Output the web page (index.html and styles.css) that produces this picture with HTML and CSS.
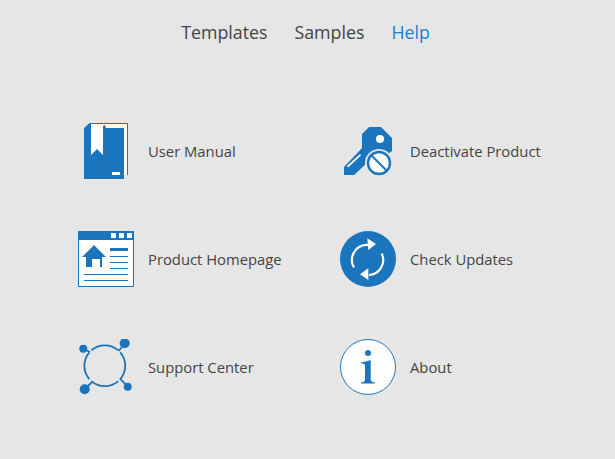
FILE: index.html
```html
<!DOCTYPE html>
<html lang="en">
<head>
<meta charset="utf-8">
<title>Help</title>
<link rel="stylesheet" href="styles.css">
</head>
<body>
<nav class="tabs">
  <a class="tab">Templates</a>
  <a class="tab">Samples</a>
  <a class="tab tab-active">Help</a>
</nav>
<main class="grid">
  <a class="item">
    <svg class="icon" viewBox="0 0 56 56" width="56" height="56">
      <path class="white" d="M11 1H49V52H46V5H11Z"/>
      <path class="outline" d="M11 .5H49.500V52"/>
      <path class="fill" d="M6 5 11 .5H13V5H25V3L27 2 28 5H46V56H6Z"/>
      <path class="white" d="M13 1H25V32L19 26L13 32Z"/>
      <rect class="white" x="34" y="49" width="8" height="3"/>
    </svg>
    <span class="label">User Manual</span>
  </a>
  <a class="item">
    <svg class="icon" viewBox="0 0 56 56" width="56" height="56">
      <path class="fill" d="M4 44 22 25V11L29 4H41L52 15V28L38 38H29L14 52H4Z"/>
      <path class="white" d="M7 43 20 31 21 32.500 8 44.500Z"/>
      <circle class="white" cx="40" cy="16" r="4"/>
      <circle class="halo" cx="39" cy="40" r="14"/>
      <circle class="ring" cx="39" cy="40" r="11"/>
      <path class="slash" d="M31.500 32.500 46.500 47.500"/>
    </svg>
    <span class="label">Deactivate Product</span>
  </a>
  <a class="item">
    <svg class="icon" viewBox="0 0 56 56" width="56" height="56">
      <rect class="white" x="0.500" y="0.500" width="55" height="55"/>
      <rect class="outline" x="0.500" y="0.500" width="55" height="55"/>
      <rect class="fill" width="56" height="9"/>
      <path class="white" d="M33 2h5v5h-5zM41 2h5v5h-5zM49 2h5v5h-5z"/>
      <path class="fill" d="M16 14 28 26H24V36H8V26H4Z"/>
      <rect class="white" x="14" y="28" width="8" height="8"/>
      <path class="fill" d="M32 17h18v3H32zM32 25h18v1H32zM32 31h18v1H32zM32 37h18v1H32zM6 43h44v1H6zM6 49h44v1H6z"/>
    </svg>
    <span class="label">Product Homepage</span>
  </a>
  <a class="item">
    <svg class="icon" viewBox="0 0 56 56" width="56" height="56">
      <circle class="fill" cx="28" cy="28" r="28"/>
      <path class="arrow" d="M14 36.500A15 15 0 0 1 28 14"/>
      <path class="white" d="M27.300 7.300 36 13 28.300 19Z"/>
      <path class="arrow" d="M41.700 22.500A15 15 0 0 1 29 44"/>
      <path class="white" d="M20 43.300 28.300 37.300V49Z"/>
    </svg>
    <span class="label">Check Updates</span>
  </a>
  <a class="item">
    <svg class="icon" viewBox="0 0 56 56" width="56" height="56">
      <path class="ring-thin" d="M13.400 11.300A20.400 20.400 0 0 1 40.200 11.300M42.200 13.300A20.400 20.400 0 0 1 42.200 40.100M40.200 42.100A20.400 20.400 0 0 1 13.400 42.100M11.400 40.100A20.400 20.400 0 0 1 11.400 13.300"/>
      <path class="link" d="M5.300 9.700 12 13M46.700 4.300 40.700 12M6.700 50.300 14 43M49.700 47.700 42 39.700"/>
      <circle class="fill" cx="5.300" cy="9.700" r="4"/>
      <circle class="fill" cx="46.700" cy="4.300" r="5"/>
      <circle class="fill" cx="6.700" cy="50.300" r="5"/>
      <circle class="fill" cx="49.700" cy="47.700" r="4"/>
    </svg>
    <span class="label">Support Center</span>
  </a>
  <a class="item">
    <svg class="icon" viewBox="0 0 56 56" width="56" height="56">
      <circle class="info-ring" cx="28" cy="28" r="27.500"/>
      <circle class="fill" cx="28" cy="14" r="3"/>
      <path class="fill" d="M21 23.500C24 23 27.500 22.300 30.700 21V40C30.700 42.500 32 43.200 35 43.500V44.500H21V43.500C24 43.200 25 42.500 25 40V27C25 25 24 24.500 21 24.500Z"/>
    </svg>
    <span class="label">About</span>
  </a>
</main>
</body>
</html>
```
FILE: styles.css
```css
html, body {
  margin: 0;
  height: 100%;
}
body {
  background: #e6e6e6;
  font-family: "Open Sans", "Noto Sans", sans-serif;
  color: #444;
  overflow: hidden;
}
.tabs {
  display: flex;
  justify-content: center;
  gap: 27px;
  padding-top: 20px;
  padding-right: 4px;
  height: 103px;
  box-sizing: border-box;
}
.tab {
  font-size: 17.800px;
  line-height: 25px;
  color: #444;
}
.tab-active {
  color: #1a7fd1;
}
.grid {
  display: grid;
  grid-template-columns: 262px 262px;
  grid-auto-rows: 56px;
  row-gap: 52px;
  padding-left: 78px;
  padding-top: 20px;
}
.item {
  display: flex;
  align-items: center;
  gap: 14px;
}
.icon {
  display: block;
  flex: none;
}
.label {
  font-size: 14.800px;
  color: #444;
}
.fill { fill: #1b75bc; }
.white { fill: #fff; }
.outline { fill: none; stroke: #1b75bc; stroke-width: 1; }
.halo { fill: #e6e6e6; }
.ring { fill: #fff; stroke: #1b75bc; stroke-width: 2.400; }
.slash { fill: none; stroke: #1b75bc; stroke-width: 2; }
.ring-thin { fill: none; stroke: #1b75bc; stroke-width: 1.800; }
.link { fill: none; stroke: #1b75bc; stroke-width: 1.800; }
.arrow { fill: none; stroke: #fff; stroke-width: 2.200; }
.info-ring { fill: #fff; stroke: #1b75bc; stroke-width: 1; }
```
